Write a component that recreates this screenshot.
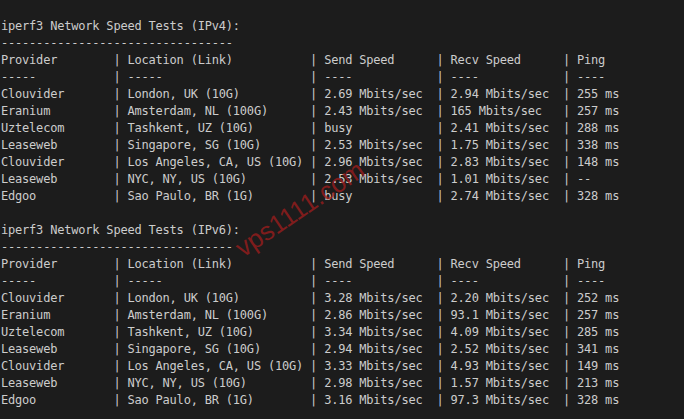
const pad = (s, n) => s + ' '.repeat(Math.max(0, n - s.length));

const row = (a, b, c, d, e) =>
  `${pad(a, 15)} | ${pad(b, 25)} | ${pad(c, 15)} | ${pad(d, 15)} | ${e}`;

const ipv4 = [
  ['Clouvider', 'London, UK (10G)', '2.69 Mbits/sec', '2.94 Mbits/sec', '255 ms'],
  ['Eranium', 'Amsterdam, NL (100G)', '2.43 Mbits/sec', '165 Mbits/sec', '257 ms'],
  ['Uztelecom', 'Tashkent, UZ (10G)', 'busy', '2.41 Mbits/sec', '288 ms'],
  ['Leaseweb', 'Singapore, SG (10G)', '2.53 Mbits/sec', '1.75 Mbits/sec', '338 ms'],
  ['Clouvider', 'Los Angeles, CA, US (10G)', '2.96 Mbits/sec', '2.83 Mbits/sec', '148 ms'],
  ['Leaseweb', 'NYC, NY, US (10G)', '2.53 Mbits/sec', '1.01 Mbits/sec', '--'],
  ['Edgoo', 'Sao Paulo, BR (1G)', 'busy', '2.74 Mbits/sec', '328 ms'],
];

const ipv6 = [
  ['Clouvider', 'London, UK (10G)', '3.28 Mbits/sec', '2.20 Mbits/sec', '252 ms'],
  ['Eranium', 'Amsterdam, NL (100G)', '2.86 Mbits/sec', '93.1 Mbits/sec', '257 ms'],
  ['Uztelecom', 'Tashkent, UZ (10G)', '3.34 Mbits/sec', '4.09 Mbits/sec', '285 ms'],
  ['Leaseweb', 'Singapore, SG (10G)', '2.94 Mbits/sec', '2.52 Mbits/sec', '341 ms'],
  ['Clouvider', 'Los Angeles, CA, US (10G)', '3.33 Mbits/sec', '4.93 Mbits/sec', '149 ms'],
  ['Leaseweb', 'NYC, NY, US (10G)', '2.98 Mbits/sec', '1.57 Mbits/sec', '213 ms'],
  ['Edgoo', 'Sao Paulo, BR (1G)', '3.16 Mbits/sec', '97.3 Mbits/sec', '328 ms'],
];

function section(label, rows) {
  return [
    `iperf3 Network Speed Tests (${label}):`,
    '---------------------------------',
    row('Provider', 'Location (Link)', 'Send Speed', 'Recv Speed', 'Ping'),
    row('-----', '-----', '----', '----', '----'),
    ...rows.map((r) => row(...r)),
  ];
}

const lines = ['', ...section('IPv4', ipv4), '', ...section('IPv6', ipv6)];

export default function App() {
  return (
    <div className="relative w-[684px] h-[419px] overflow-hidden bg-[#1c1c1c]">
      <div
        className="pt-[1px] pl-[1px] text-[#cccccc] text-[12px] leading-[17px] tracking-[-0.2px] whitespace-pre"
        style={{ fontFamily: '"DejaVu Sans Mono", "Liberation Mono", monospace' }}
      >
        {lines.map((l, i) => (
          <div key={i} className="h-[17px]">
            {l}
          </div>
        ))}
      </div>

      {/* watermark */}
      <div
        className="absolute left-[300px] top-[209px] -translate-x-1/2 -translate-y-1/2 -rotate-[34deg] text-[26px] text-[#a11d1d]/75 whitespace-nowrap"
        style={{ fontFamily: '"Liberation Sans", Arial, sans-serif' }}
      >
        vps1111.com
      </div>
    </div>
  );
}
